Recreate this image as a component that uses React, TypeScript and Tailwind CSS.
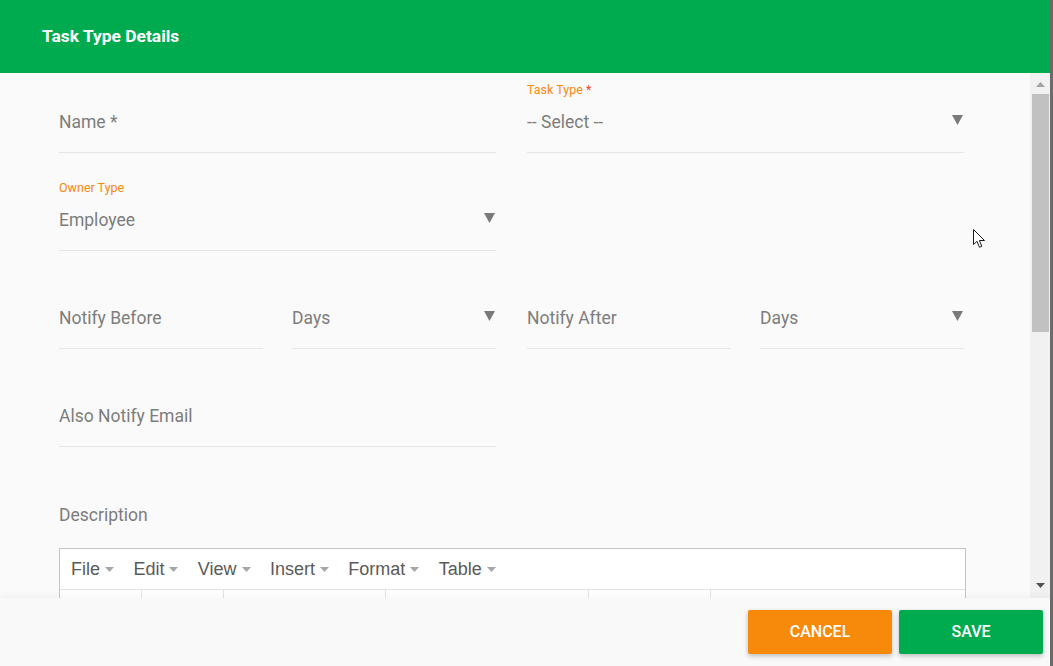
import React from "react";

const Arrow = () => (
  <svg width="11" height="10" viewBox="0 0 11 10" className="shrink-0">
    <path d="M0 0 H11 L5.5 10 Z" fill="#7a7a7a" />
  </svg>
);

const Caret = () => (
  <svg width="9" height="5" viewBox="0 0 9 5" className="ml-[5px] shrink-0">
    <path d="M0 0 H9 L4.5 5 Z" fill="#a6a6a6" />
  </svg>
);

type FieldProps = {
  label?: React.ReactNode;
  value: string;
  select?: boolean;
};

const Field = ({ label, value, select }: FieldProps) => (
  <div className="flex flex-col pt-[9px]">
    <div className="h-[16px] text-[12.5px] leading-[16px] text-[#f7890b]">{label}</div>
    <div className="h-[55px] pb-[7px] flex items-center justify-between border-b border-[#e6e6e6]">
      <span className="text-[17.5px] text-[#7d7d7d] leading-[24px]">{value}</span>
      {select && (
        <span className="mr-[1px] -mt-[4px]">
          <Arrow />
        </span>
      )}
    </div>
  </div>
);

export default function App() {
  const menus = ["File", "Edit", "View", "Insert", "Format", "Table"];
  return (
    <div
      className="w-[1053px] h-[666px] flex bg-[#6b6b6b] overflow-hidden"
      style={{ fontFamily: "Roboto, 'Noto Sans', sans-serif" }}
    >
      <div className="w-[1050px] h-full flex flex-col bg-[#fafafa] relative">
        <div className="h-[73px] shrink-0 bg-[#00ab4f] flex items-center px-[42px]">
          <span className="text-white font-bold text-[17.4px] leading-[20px] -mt-[2px]">Task Type Details</span>
        </div>
        <div className="h-[525px] shrink-0 flex">
          <div className="flex-1 overflow-hidden bg-[#fafafa] pl-[59px]">
            <div className="w-[905px] grid grid-cols-2 gap-x-[31px] gap-y-[18px]">
              <Field value="Name *" />
              <Field
                label={
                  <span>
                    Task Type <span className="text-[#f44336]">*</span>
                  </span>
                }
                value="-- Select --"
                select
              />
              <Field label="Owner Type" value="Employee" select />
              <div />
              <div className="grid grid-cols-2 gap-x-[29px]">
                <Field value="Notify Before" />
                <Field value="Days" select />
              </div>
              <div className="grid grid-cols-2 gap-x-[29px]">
                <Field value="Notify After" />
                <Field value="Days" select />
              </div>
              <Field value="Also Notify Email" />
              <div />
            </div>
            <div className="mt-[56px] h-[24px] leading-[24px] text-[17.5px] text-[#7d7d7d]">Description</div>
            <div className="mt-[21px] w-[907px] border border-[#c5c5c5] bg-white">
              <div
                className="h-[41px] flex items-center pl-[11px] gap-[19.4px] border-b border-[#e2e2e2] pt-[1px]"
                style={{ fontFamily: "'Liberation Sans', Arial, sans-serif" }}
              >
                {menus.map((m) => (
                  <div key={m} className="flex items-center text-[18px] text-[#5a5a5a]">
                    {m}
                    <Caret />
                  </div>
                ))}
              </div>
              <div className="h-[40px] flex">
                <div className="w-[82px] border-r border-[#e2e2e2]" />
                <div className="w-[82px] border-r border-[#e2e2e2]" />
                <div className="w-[162px] border-r border-[#e2e2e2]" />
                <div className="w-[203px] border-r border-[#e2e2e2]" />
                <div className="w-[122px] border-r border-[#e2e2e2]" />
                <div className="flex-1" />
              </div>
            </div>
          </div>
          <div className="w-[20px] bg-[#f1f1f1] flex flex-col items-center">
            <div className="h-[21px] flex items-center justify-center pt-[1px]">
              <svg width="9" height="5" viewBox="0 0 9 5">
                <path d="M0 5 H9 L4.5 0 Z" fill="#a3a3a3" />
              </svg>
            </div>
            <div className="w-[17px] h-[238px] bg-[#c1c1c1]" />
            <div className="flex-1" />
            <div className="h-[25px] flex items-center justify-center">
              <svg width="9" height="5" viewBox="0 0 9 5">
                <path d="M0 0 H9 L4.5 5 Z" fill="#505050" />
              </svg>
            </div>
          </div>
        </div>
        <div className="flex-1 bg-[#f9f9f9] shadow-[0_-3px_5px_rgba(0,0,0,0.03)] flex justify-end items-start pt-[12px] pr-[7px] gap-[7px] z-10">
          <button className="w-[144px] h-[44px] rounded-[2px] bg-[#f7890b] text-white text-[16px] font-medium shadow-[0_2px_5px_rgba(0,0,0,0.25)]">
            CANCEL
          </button>
          <button className="w-[144px] h-[44px] rounded-[2px] bg-[#00ab4f] text-white text-[16px] font-medium shadow-[0_2px_5px_rgba(0,0,0,0.25)]">
            SAVE
          </button>
        </div>
        <svg
          className="absolute left-[973px] top-[229px]"
          width="13"
          height="20"
          viewBox="0 0 13 20"
        >
          <path
            d="M0.5 0.5 L0.5 15.5 L4 12.3 L6.5 18.3 L8.8 17.3 L6.4 11.5 L11.5 11.5 Z"
            fill="#ffffff"
            stroke="#1a1a1a"
            strokeWidth="1"
            strokeLinejoin="miter"
          />
        </svg>
      </div>
    </div>
  );
}
